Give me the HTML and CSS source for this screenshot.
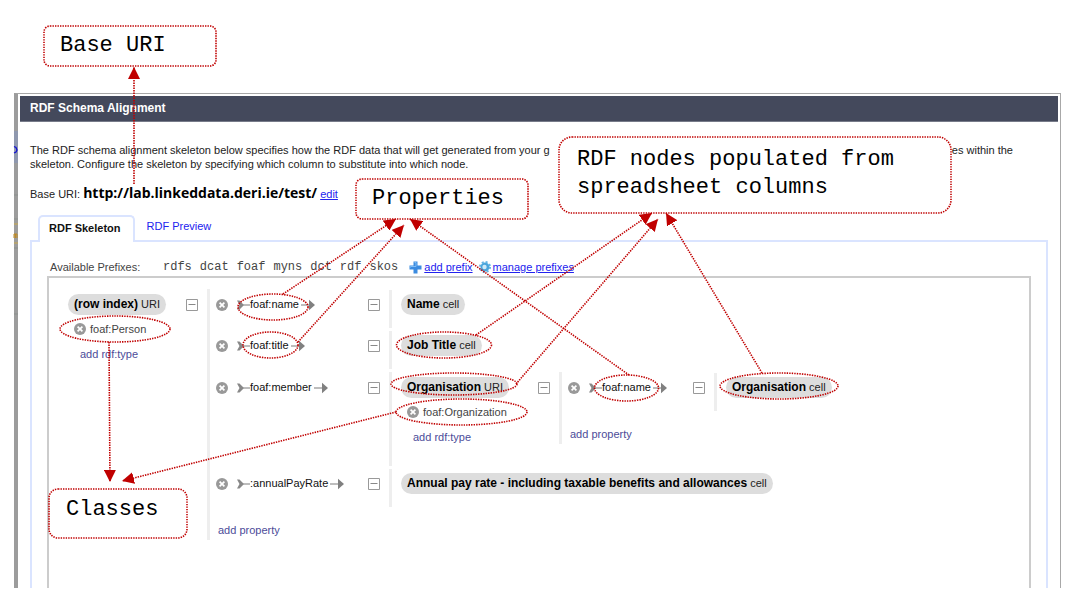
FILE: index.html
```html
<!DOCTYPE html>
<html lang="en">
<head>
<meta charset="utf-8">
<title>RDF Schema Alignment</title>
<link rel="stylesheet" href="styles.css">
</head>
<body>
<svg class="defs" aria-hidden="true">
  <symbol id="remove" viewBox="0 0 12 12"><circle cx="6" cy="6" r="6" fill="#999"/><path d="M3.6 3.6l4.8 4.8M8.4 3.6L3.6 8.4" stroke="#fff" stroke-width="1.7"/></symbol>
  <symbol id="toggle" viewBox="0 0 12 12"><path d="M.5.5h11v11H.5z" fill="#fff" stroke="#999"/><path d="M2.500 5.500h7" stroke="#888"/></symbol>
  <symbol id="tail" viewBox="0 0 13 12"><path d="M0 1.500h2.500L7 6l-4.500 4.500H0L2.500 6z" fill="#888"/><path d="M6 6h7" stroke="#999" stroke-width="1.300"/></symbol>
  <symbol id="head" viewBox="0 0 14 12"><path d="M0 6h9" stroke="#999" stroke-width="1.300"/><path d="M8 .8L14 6l-6 5.200z" fill="#808080"/></symbol>
</svg>
<main class="figure">
  <section class="dialog">
    <h1 class="dialog-title">RDF Schema Alignment</h1>
    <div class="dialog-body">
      <div class="intro">
        <p class="intro-line"><span>The RDF schema alignment skeleton below specifies how the RDF data that will get generated from your g</span><span>es within the</span></p>
        <p>skeleton. Configure the skeleton by specifying which column to substitute into which node.</p>
      </div>
      <p class="base"><span>Base URI:</span><strong class="base-uri">http://lab.linkeddata.deri.ie/test/</strong><a class="link" href="#edit">edit</a></p>
      <nav class="tabs"><a class="tab tab-active" href="#skeleton">RDF Skeleton</a><a class="tab" href="#preview">RDF Preview</a></nav>
      <div class="panel" id="skeleton">
        <div class="prefixes">
          <span class="prefix-label">Available Prefixes:</span>
          <span class="prefix-list"><span>rdfs</span><span>dcat</span><span>foaf</span><span>myns</span><span>dct</span><span>rdf</span><span>skos</span></span>
          <a class="link icon-link" href="#add"><svg width="13" height="13" viewBox="0 0 13 13"><path d="M4.500.5h4v4h4v4h-4v4h-4v-4h-4v-4h4z" fill="#3b8be0"/><path d="M5.500 1.500h1.500v4H1.500v1" fill="none" stroke="#80bdf5"/></svg>add prefix</a>
          <a class="link icon-link" href="#manage"><svg width="12" height="12" viewBox="0 0 12 12"><circle cx="6" cy="6" r="4.500" fill="#4aa5dc"/><circle cx="6" cy="6" r="5" fill="none" stroke="#62b4e4" stroke-width="2" stroke-dasharray="2 1.930"/><circle cx="5.500" cy="6" r="2.200" fill="#cfeaf8"/></svg>manage prefixes</a>
        </div>
        <div class="canvas">
          <div class="branch root">
            <div class="node">
              <a class="pill" href="#n0"><b>(row index)</b> URI</a>
              <div class="type"><button class="ico" aria-label="Remove type"><svg><use href="#remove"/></svg></button>foaf:Person</div>
              <a class="add add-type" href="#t0">add rdf:type</a>
            </div>
            <button class="ico toggle" aria-label="Collapse"><svg><use href="#toggle"/></svg></button>
            <div class="children">
              <div class="row">
                <div class="property"><button class="ico" aria-label="Remove property"><svg><use href="#remove"/></svg></button><a class="prop" href="#p1"><svg class="tail"><use href="#tail"/></svg>foaf:name<svg class="head"><use href="#head"/></svg></a></div>
                <button class="ico toggle" aria-label="Collapse"><svg><use href="#toggle"/></svg></button>
                <div class="target"><div class="node"><a class="pill" href="#n1"><b>Name</b> cell</a></div></div>
              </div>
              <div class="row">
                <div class="property"><button class="ico" aria-label="Remove property"><svg><use href="#remove"/></svg></button><a class="prop" href="#p2"><svg class="tail"><use href="#tail"/></svg>foaf:title<svg class="head"><use href="#head"/></svg></a></div>
                <button class="ico toggle" aria-label="Collapse"><svg><use href="#toggle"/></svg></button>
                <div class="target"><div class="node"><a class="pill" href="#n2"><b>Job Title</b> cell</a></div></div>
              </div>
              <div class="row row-nested">
                <div class="property"><button class="ico" aria-label="Remove property"><svg><use href="#remove"/></svg></button><a class="prop" href="#p3"><svg class="tail"><use href="#tail"/></svg>foaf:member<svg class="head"><use href="#head"/></svg></a></div>
                <button class="ico toggle" aria-label="Collapse"><svg><use href="#toggle"/></svg></button>
                <div class="target">
                  <div class="branch">
                    <div class="node">
                      <a class="pill" href="#n3"><b>Organisation</b> URI</a>
                      <div class="type"><button class="ico" aria-label="Remove type"><svg><use href="#remove"/></svg></button>foaf:Organization</div>
                      <a class="add add-type" href="#t3">add rdf:type</a>
                    </div>
                    <button class="ico toggle" aria-label="Collapse"><svg><use href="#toggle"/></svg></button>
                    <div class="children children-inner">
                      <div class="row">
                        <div class="property"><button class="ico" aria-label="Remove property"><svg><use href="#remove"/></svg></button><a class="prop" href="#p4"><svg class="tail"><use href="#tail"/></svg>foaf:name<svg class="head"><use href="#head"/></svg></a></div>
                        <button class="ico toggle" aria-label="Collapse"><svg><use href="#toggle"/></svg></button>
                        <div class="target"><div class="node"><a class="pill" href="#n4"><b>Organisation</b> cell</a></div></div>
                      </div>
                      <a class="add add-property" href="#a4">add property</a>
                    </div>
                  </div>
                </div>
              </div>
              <div class="row">
                <div class="property"><button class="ico" aria-label="Remove property"><svg><use href="#remove"/></svg></button><a class="prop" href="#p5"><svg class="tail"><use href="#tail"/></svg>:annualPayRate<svg class="head"><use href="#head"/></svg></a></div>
                <button class="ico toggle" aria-label="Collapse"><svg><use href="#toggle"/></svg></button>
                <div class="target"><div class="node"><a class="pill" href="#n5"><b>Annual pay rate - including taxable benefits and allowances</b> cell</a></div></div>
              </div>
              <a class="add add-property" href="#a0">add property</a>
            </div>
          </div>
        </div>
      </div>
    </div>
  </section>

  <div class="callout callout-base">Base URI</div>
  <div class="callout callout-properties">Properties</div>
  <div class="callout callout-nodes">RDF nodes populated from<br>spreadsheet columns</div>
  <div class="callout callout-classes">Classes</div>

  <svg class="marks" width="1069" height="588" viewBox="0 0 1069 588" aria-hidden="true">
    <defs>
      <marker id="arrow" markerUnits="userSpaceOnUse" markerWidth="12" markerHeight="12" refX="12" refY="6" orient="auto"><path d="M0 0l12 6-12 6z" fill="#c00000"/></marker>
    </defs>
    <path d="M14 131h4v32h-4z" fill="#8f98ae"/>
    <path d="M14 146.500l2 1 1 2.500-1 2-2 1" fill="none" stroke="#1010d0" stroke-width="1.300"/>
    <path d="M14 195h4M14 219h4M14 248h4M14 314h4" stroke="#8a8f8c"/>
    <path d="M14 224h4M14 243h4" stroke="#cba94a"/>
    <path d="M14 238v-4h1.500v4M15.500 234h1.500v4" fill="none" stroke="#c08a20"/>
    <g fill="none" stroke="#c00000" stroke-width="1.600" stroke-dasharray="1.400 1.100">
      <rect x="44" y="26" width="172" height="40" rx="6"/>
      <rect x="356" y="179" width="172" height="40" rx="6"/>
      <rect x="559" y="137" width="392" height="76" rx="13"/>
      <rect x="49" y="489" width="138" height="49" rx="9"/>
      <ellipse cx="273" cy="307" rx="35" ry="13"/>
      <ellipse cx="270.500" cy="345" rx="27.500" ry="13"/>
      <ellipse cx="115" cy="329" rx="55" ry="13"/>
      <ellipse cx="444" cy="345" rx="47.500" ry="13"/>
      <ellipse cx="454" cy="384" rx="63" ry="11"/>
      <ellipse cx="461.500" cy="412" rx="65.500" ry="13"/>
      <ellipse cx="626.500" cy="388" rx="32" ry="13"/>
      <ellipse cx="779" cy="386" rx="59" ry="13"/>
      <g marker-end="url(#arrow)">
        <path d="M134 184V67"/>
        <path d="M283 294L396 219"/>
        <path d="M298 342L404 225"/>
        <path d="M629 375L410 219"/>
        <path d="M476 335L652 213"/>
        <path d="M516 384L658 219"/>
        <path d="M762 373L666 213"/>
        <path d="M109 342L110 482"/>
        <path d="M396 412L122 481"/>
      </g>
    </g>
  </svg>
</main>
</body>
</html>
```

FILE: styles.css
```css
* { box-sizing: border-box; }
body {
  margin: 0;
  background: #fff;
  color: #222;
  font: 11px/14px "Liberation Sans", Arial, sans-serif;
}
p, h1 { margin: 0; }
a { color: inherit; text-decoration: none; }
button { border: 0; padding: 0; background: none; }
.defs { position: absolute; width: 0; height: 0; }

.figure {
  position: relative;
  display: flex;
  flex-direction: column;
  min-height: 100vh;
  padding: 93px 8px 8px 14px;
}
.dialog {
  flex: 1;
  display: flex;
  flex-direction: column;
  padding: 2px 2px 0 2px;
  border: 1px solid #a8a8a8;
  border-left: 4px solid #9c9c9c;
  border-bottom: 0;
}
.dialog-title {
  padding: 5px 10px;
  background: #44495c;
  border-bottom: 1px solid #777b89;
  color: #fff;
  font-size: 12px;
  line-height: 15px;
}
.dialog-body {
  flex: 1;
  display: flex;
  flex-direction: column;
  padding: 21px 10px 0;
}
.intro { padding-right: 35px; }
.intro-line { display: flex; justify-content: space-between; }
.base {
  display: flex;
  align-items: baseline;
  gap: 3px;
  margin-top: 10px;
  line-height: 24px;
}
.base-uri { color: #000; font-family: "Open Sans", sans-serif; font-size: 14px; }
.link { color: #22e; text-decoration: underline; }

.tabs {
  display: flex;
  align-items: flex-end;
  padding-left: 8px;
  margin-top: 9px;
}
.tab { padding: 0 12px 7px; color: #22e; }
.tab-active {
  position: relative;
  z-index: 1;
  padding: 4px 12px 7px 9px;
  margin-bottom: -2px;
  border: 2px solid #dae4ff;
  border-bottom: 0;
  border-radius: 5px 5px 0 0;
  background: #fff;
  color: #111;
  font-weight: bold;
}
.panel {
  flex: 1;
  display: flex;
  flex-direction: column;
  padding: 16px 15px 0;
  border: 2px solid #dae4ff;
  border-bottom: 0;
}
.prefixes {
  display: flex;
  align-items: center;
  gap: 6px;
  padding-left: 3px;
  line-height: 18px;
}
.prefix-label { width: 107px; color: #444; }
.prefix-list {
  display: flex;
  gap: 8px;
  margin-right: 5px;
  color: #444;
  font: 12px/18px "Liberation Mono", monospace;
}
.icon-link { display: flex; align-items: center; gap: 2px; }

.canvas {
  flex: 1;
  padding: 11px 19px 0;
  border: 2px solid #ccc;
  border-bottom: 0;
}
.branch { display: flex; align-items: flex-start; }
.node { display: flex; flex-direction: column; align-items: flex-start; padding-top: 4px; }
.branch > .node { width: 137px; padding-top: 5px; }
.root > .node { width: 118px; }
.pill {
  padding: 0 6px;
  border-radius: 11px;
  background: #ddd;
  color: #222;
  line-height: 21px;
  white-space: nowrap;
}
.pill b { color: #000; font-size: 12px; }
.type {
  display: flex;
  align-items: center;
  gap: 4px;
  padding-left: 6px;
  margin-top: 6px;
  color: #444;
  line-height: 16px;
}
.add { color: #4c4c99; }
.add-type { margin: 10px 0 0 12px; }
.ico { flex: none; width: 12px; height: 12px; }
.ico svg { display: block; width: 12px; height: 12px; }
.toggle { margin: 9px 9px 0 0; }
.branch > .toggle { margin-top: 10px; }
.children {
  display: flex;
  flex-direction: column;
  gap: 3px;
  padding: 1px 0 3px;
  border-left: 3px solid #eee;
}
.children-inner { margin-bottom: 22px; }
.row { display: flex; }
.property {
  display: flex;
  align-items: flex-start;
  gap: 9px;
  width: 158px;
  padding: 9px 0 0 6px;
}
.children-inner .property { width: 131px; }
.row-nested > .property { padding-top: 10px; }
.row-nested > .toggle { margin-top: 10px; }
.row-nested .children .property { padding-top: 9px; }
.prop { display: flex; color: #111; line-height: 10px; }
.tail { width: 13px; height: 12px; }
.head { width: 14px; height: 12px; margin-left: 2px; }
.target {
  min-height: 38px;
  padding-left: 9px;
  border-left: 3px solid #eee;
}
.add-property { margin: 13px 0 0 8px; }

.callout {
  position: absolute;
  background: #fff;
  color: #000;
  font: 22px/28px "Liberation Mono", "Courier New", monospace;
  white-space: nowrap;
}
.callout-base { left: 44px; top: 26px; padding: 6px 50px 6px 16px; border-radius: 6px; }
.callout-properties { left: 356px; top: 179px; padding: 6px 24px 6px 16px; border-radius: 6px; }
.callout-nodes { left: 559px; top: 137px; padding: 9px 55px 11px 18px; border-radius: 13px; }
.callout-classes { left: 49px; top: 489px; padding: 7px 28px 14px 17px; border-radius: 9px; }
.marks { position: absolute; left: 0; top: 0; }
```
